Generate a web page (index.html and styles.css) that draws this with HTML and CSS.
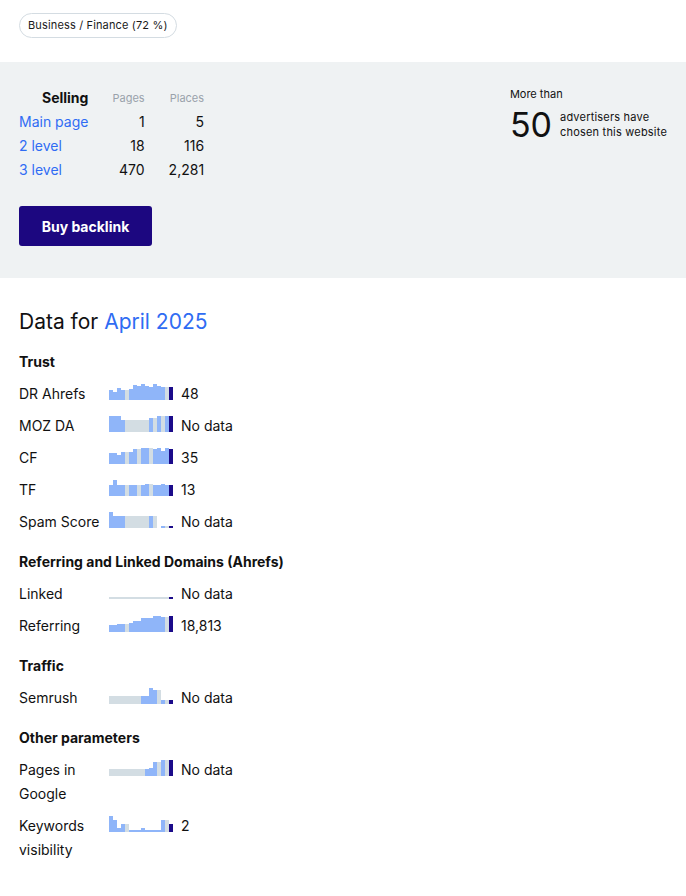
FILE: index.html
```html
<!DOCTYPE html>
<html lang="en">
<head>
<meta charset="utf-8">
<title>Site data</title>
<link rel="stylesheet" href="styles.css">
</head>
<body>
<div class="top">
  <span class="tag">Business / Finance (72 %)</span>
</div>

<section class="sell">
  <div class="sell-left">
    <table class="sell-table">
      <thead>
        <tr><th class="c-name">Selling</th><th class="c-num">Pages</th><th class="c-num">Places</th></tr>
      </thead>
      <tbody>
        <tr><td class="c-name"><a class="link" href="#">Main page</a></td><td class="c-num">1</td><td class="c-num">5</td></tr>
        <tr><td class="c-name"><a class="link" href="#">2 level</a></td><td class="c-num">18</td><td class="c-num">116</td></tr>
        <tr><td class="c-name"><a class="link" href="#">3 level</a></td><td class="c-num">470</td><td class="c-num">2,281</td></tr>
      </tbody>
    </table>
    <button class="btn">Buy backlink</button>
  </div>
  <div class="adv">
    <div class="adv-pre">More than</div>
    <div class="adv-row">
      <span class="adv-num">50</span>
      <span class="adv-text">advertisers have<br>chosen this website</span>
    </div>
  </div>
</section>

<section class="data">
  <h2 class="data-title">Data for <span class="accent">April 2025</span></h2>

  <div class="group">
    <div class="group-title">Trust</div>
    <div class="row">
      <div class="label">DR Ahrefs</div>
      <svg class="chart" width="64" height="16" viewBox="0 0 64 16">
        <rect class="b" x="0" y="6" width="4" height="10"/>
        <rect class="b" x="4" y="8" width="4" height="8"/>
        <rect class="b" x="8" y="4" width="4" height="12"/>
        <rect class="b" x="12" y="6" width="4" height="10"/>
        <rect class="g" x="16" y="6" width="4" height="10"/>
        <rect class="b" x="20" y="5" width="4" height="11"/>
        <rect class="b" x="24" y="1" width="4" height="15"/>
        <rect class="b" x="28" y="2" width="4" height="14"/>
        <rect class="b" x="32" y="0" width="4" height="16"/>
        <rect class="b" x="36" y="2" width="4" height="14"/>
        <rect class="b" x="40" y="3" width="4" height="13"/>
        <rect class="b" x="44" y="0" width="4" height="16"/>
        <rect class="b" x="48" y="2" width="4" height="14"/>
        <rect class="b" x="52" y="3" width="4" height="13"/>
        <rect class="g" x="56" y="3" width="4" height="13"/>
        <rect class="d" x="60" y="3" width="4" height="13"/>
      </svg>
      <div class="value">48</div>
    </div>
    <div class="row">
      <div class="label">MOZ DA</div>
      <svg class="chart" width="64" height="16" viewBox="0 0 64 16">
        <rect class="b" x="0" y="0" width="12" height="16"/>
        <rect class="b" x="12" y="4" width="4" height="12"/>
        <rect class="g" x="16" y="4" width="24" height="12"/>
        <rect class="b" x="40" y="2" width="4" height="14"/>
        <rect class="g" x="44" y="2" width="4" height="14"/>
        <rect class="b" x="48" y="0" width="4" height="16"/>
        <rect class="g" x="52" y="0" width="4" height="16"/>
        <rect class="b" x="56" y="0" width="4" height="16"/>
        <rect class="d" x="60" y="0" width="4" height="16"/>
      </svg>
      <div class="value">No data</div>
    </div>
    <div class="row">
      <div class="label">CF</div>
      <svg class="chart" width="64" height="16" viewBox="0 0 64 16">
        <rect class="b" x="0" y="5" width="8" height="11"/>
        <rect class="b" x="8" y="7" width="4" height="9"/>
        <rect class="b" x="12" y="4" width="4" height="12"/>
        <rect class="g" x="16" y="4" width="4" height="12"/>
        <rect class="b" x="20" y="4" width="4" height="12"/>
        <rect class="b" x="24" y="1" width="4" height="15"/>
        <rect class="g" x="28" y="1" width="4" height="15"/>
        <rect class="b" x="32" y="0" width="8" height="16"/>
        <rect class="g" x="40" y="0" width="4" height="16"/>
        <rect class="b" x="44" y="1" width="4" height="15"/>
        <rect class="b" x="48" y="0" width="4" height="16"/>
        <rect class="b" x="52" y="3" width="4" height="13"/>
        <rect class="b" x="56" y="0" width="4" height="16"/>
        <rect class="d" x="60" y="1" width="4" height="15"/>
      </svg>
      <div class="value">35</div>
    </div>
    <div class="row">
      <div class="label">TF</div>
      <svg class="chart" width="64" height="16" viewBox="0 0 64 16">
        <rect class="b" x="0" y="5" width="4" height="11"/>
        <rect class="b" x="4" y="0" width="4" height="16"/>
        <rect class="b" x="8" y="5" width="8" height="11"/>
        <rect class="g" x="16" y="5" width="4" height="11"/>
        <rect class="b" x="20" y="5" width="8" height="11"/>
        <rect class="g" x="28" y="5" width="4" height="11"/>
        <rect class="b" x="32" y="5" width="4" height="11"/>
        <rect class="b" x="36" y="4" width="4" height="12"/>
        <rect class="g" x="40" y="4" width="4" height="12"/>
        <rect class="b" x="44" y="5" width="8" height="11"/>
        <rect class="b" x="52" y="4" width="4" height="12"/>
        <rect class="b" x="56" y="5" width="4" height="11"/>
        <rect class="d" x="60" y="5" width="4" height="11"/>
      </svg>
      <div class="value">13</div>
    </div>
    <div class="row">
      <div class="label">Spam Score</div>
      <svg class="chart" width="64" height="16" viewBox="0 0 64 16">
        <rect class="b" x="0" y="0" width="4" height="16"/>
        <rect class="b" x="4" y="4" width="12" height="12"/>
        <rect class="g" x="16" y="4" width="24" height="12"/>
        <rect class="b" x="40" y="4" width="4" height="12"/>
        <rect class="g" x="44" y="4" width="4" height="12"/>
        <rect class="b" x="52" y="14" width="4" height="2"/>
        <rect class="g" x="56" y="14" width="4" height="2"/>
        <rect class="d" x="60" y="14" width="4" height="2"/>
      </svg>
      <div class="value">No data</div>
    </div>
  </div>

  <div class="group">
    <div class="group-title">Referring and Linked Domains (Ahrefs)</div>
    <div class="row">
      <div class="label">Linked</div>
      <svg class="chart" width="64" height="16" viewBox="0 0 64 16">
        <rect class="g" x="0" y="13" width="60" height="2"/>
        <rect class="d" x="60" y="13" width="4" height="2"/>
      </svg>
      <div class="value">No data</div>
    </div>
    <div class="row">
      <div class="label">Referring</div>
      <svg class="chart" width="64" height="16" viewBox="0 0 64 16">
        <rect class="b" x="0" y="9" width="8" height="7"/>
        <rect class="b" x="8" y="8" width="8" height="8"/>
        <rect class="g" x="16" y="8" width="4" height="8"/>
        <rect class="b" x="20" y="7" width="4" height="9"/>
        <rect class="b" x="24" y="5" width="8" height="11"/>
        <rect class="b" x="32" y="2" width="12" height="14"/>
        <rect class="b" x="44" y="0" width="8" height="16"/>
        <rect class="b" x="52" y="1" width="4" height="15"/>
        <rect class="g" x="56" y="1" width="4" height="15"/>
        <rect class="d" x="60" y="0" width="4" height="16"/>
      </svg>
      <div class="value">18,813</div>
    </div>
  </div>

  <div class="group">
    <div class="group-title">Traffic</div>
    <div class="row">
      <div class="label">Semrush</div>
      <svg class="chart" width="64" height="16" viewBox="0 0 64 16">
        <rect class="g" x="0" y="8" width="32" height="8"/>
        <rect class="b" x="32" y="8" width="8" height="8"/>
        <rect class="b" x="40" y="0" width="4" height="16"/>
        <rect class="b" x="44" y="2" width="4" height="14"/>
        <rect class="g" x="48" y="2" width="4" height="14"/>
        <rect class="b" x="52" y="12" width="4" height="4"/>
        <rect class="g" x="56" y="12" width="4" height="4"/>
        <rect class="d" x="60" y="12" width="4" height="4"/>
      </svg>
      <div class="value">No data</div>
    </div>
  </div>

  <div class="group">
    <div class="group-title">Other parameters</div>
    <div class="row">
      <div class="label">Pages in Google</div>
      <svg class="chart" width="64" height="16" viewBox="0 0 64 16">
        <rect class="g" x="0" y="9" width="36" height="7"/>
        <rect class="b" x="36" y="9" width="4" height="7"/>
        <rect class="b" x="40" y="8" width="4" height="8"/>
        <rect class="b" x="44" y="2" width="4" height="14"/>
        <rect class="g" x="48" y="2" width="4" height="14"/>
        <rect class="b" x="52" y="0" width="4" height="16"/>
        <rect class="g" x="56" y="0" width="4" height="16"/>
        <rect class="d" x="60" y="0" width="4" height="16"/>
      </svg>
      <div class="value">No data</div>
    </div>
    <div class="row">
      <div class="label">Keywords visibility</div>
      <svg class="chart" width="64" height="16" viewBox="0 0 64 16">
        <rect class="b" x="0" y="0" width="4" height="16"/>
        <rect class="b" x="4" y="4" width="4" height="12"/>
        <rect class="b" x="8" y="12" width="4" height="4"/>
        <rect class="b" x="12" y="8" width="4" height="8"/>
        <rect class="g" x="16" y="8" width="4" height="8"/>
        <rect class="b" x="20" y="14" width="12" height="2"/>
        <rect class="b" x="32" y="12" width="4" height="4"/>
        <rect class="b" x="36" y="14" width="16" height="2"/>
        <rect class="b" x="52" y="4" width="4" height="12"/>
        <rect class="g" x="56" y="4" width="4" height="12"/>
        <rect class="d" x="60" y="8" width="4" height="8"/>
      </svg>
      <div class="value">2</div>
    </div>
  </div>
</section>
</body>
</html>
```

FILE: styles.css
```css
* { box-sizing: border-box; }

body {
  margin: 0;
  font-family: Inter, "Liberation Sans", Arial, sans-serif;
  color: #111;
  background: #fff;
}

.top {
  padding: 13px 19px 24px;
}

.tag {
  display: inline-block;
  height: 25px;
  line-height: 23px;
  padding: 0 8px;
  border: 1px solid #d4dce2;
  border-radius: 13px;
  font-size: 11px;
  letter-spacing: 0.15px;
  color: #1a1a1a;
}

.sell {
  background: #eff2f3;
  padding: 24px 19px 32px;
  display: flex;
  justify-content: space-between;
  align-items: flex-start;
}

.sell-table {
  border-collapse: collapse;
  font-size: 14px;
  line-height: 24px;
}

.sell-table th,
.sell-table td {
  padding: 0 0 0 24px;
  vertical-align: middle;
  text-align: right;
}

.sell-table .c-name { padding-left: 0; }
.sell-table td.c-name { text-align: left; }

.sell-table th.c-name {
  font-weight: 700;
  font-size: 14px;
  color: #111;
}

.sell-table th.c-num {
  font-weight: 400;
  font-size: 11px;
  color: #9aa2ab;
}

.link {
  color: #2f6cf3;
  text-decoration: none;
}

.btn {
  display: block;
  margin-top: 24px;
  width: 133px;
  height: 40px;
  border: none;
  border-radius: 3px;
  background: #1c0780;
  color: #fff;
  font-family: inherit;
  font-size: 14px;
  font-weight: 700;
  cursor: pointer;
}

.adv {
  white-space: nowrap;
}

.adv-pre {
  font-size: 11px;
  line-height: 16px;
}

.adv-row {
  margin-top: 7px;
  display: flex;
  align-items: center;
  gap: 8px;
}

.adv-num {
  font-size: 34px;
  line-height: 32px;
}

.adv-text {
  font-size: 11px;
  line-height: 15px;
  letter-spacing: 0.2px;
}

.data {
  padding: 0 19px 20px;
}

.data-title {
  margin: 30px 0 14px;
  font-size: 21px;
  line-height: 28px;
  font-weight: 400;
}

.accent { color: #2f6cf3; }

.group {
  padding-bottom: 8px;
}

.group-title {
  font-size: 14px;
  line-height: 24px;
  font-weight: 700;
  margin-bottom: 8px;
}

.row {
  display: flex;
  align-items: flex-start;
  font-size: 14px;
  line-height: 24px;
  margin-bottom: 8px;
}

.label {
  width: 90px;
  flex-shrink: 0;
}

.chart {
  display: block;
  flex-shrink: 0;
  margin-top: 2px;
}

.value {
  margin-left: 8px;
}

.b { fill: #8fb5f9; }
.g { fill: #d3dde3; }
.d { fill: #1b0b8a; }
```
